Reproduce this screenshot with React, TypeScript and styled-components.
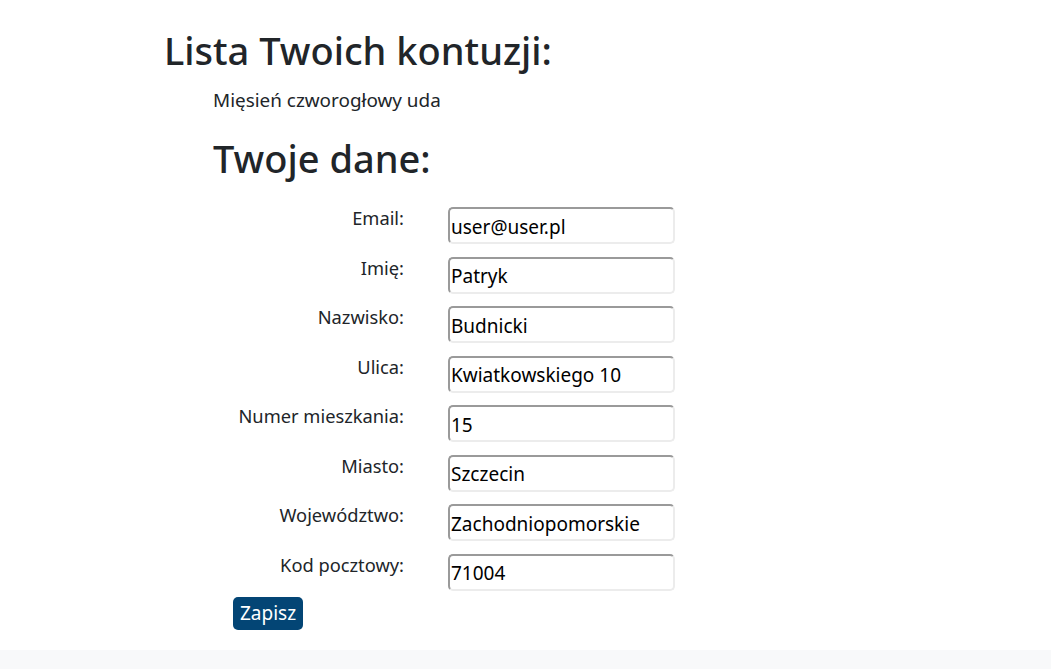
import React from "react";
import styled, { createGlobalStyle } from "styled-components";

const Global = createGlobalStyle`
  html, body { margin: 0; padding: 0; background: #fff; }
  body { font-family: "Noto Sans", "Open Sans", sans-serif; color: #212529; }
  * { box-sizing: border-box; }
`;

const Page = styled.div`
  min-height: 669px;
  display: flex;
  flex-direction: column;
`;

const Main = styled.main`
  flex: 1;
  padding: 28px 0 0 164px;
`;

const Title = styled.h1`
  margin: 0 0 13px 0;
  font-size: 38px;
  font-weight: 500;
  line-height: 1.2;
  color: #212529;
`;

const Section = styled.div`
  padding-left: 49px;
`;

const Injury = styled.div`
  font-size: 18.9px;
  line-height: 27px;
  margin-bottom: 22px;
`;

const SubTitle = styled.h2`
  margin: 0 0 26px 0;
  font-size: 38px;
  font-weight: 500;
  line-height: 1.2;
`;

const Form = styled.form`
  display: grid;
  grid-template-columns: 191px 227px;
  column-gap: 44px;
  row-gap: 12.5px;
`;

const Label = styled.label`
  text-align: right;
  font-size: 18.3px;
  line-height: 21px;
  white-space: nowrap;
`;

const Input = styled.input`
  height: 37px;
  width: 227px;
  font-family: "Noto Sans", sans-serif;
  font-size: 19px;
  color: #000;
  padding: 2px 1px 0;
  border: 2px solid #ececec;
  border-top-color: #9a9a9a;
  border-left-color: #9a9a9a;
  border-radius: 5px;
  background: #fff;
  outline: none;
`;

const Actions = styled.div`
  padding: 6px 0 0 20px;
`;

const Button = styled.button`
  background: #034575;
  color: #fff;
  border: none;
  border-radius: 5px;
  font-family: "Noto Sans", sans-serif;
  font-size: 19px;
  height: 33px;
  width: 70px;
  padding: 0;
  line-height: 33px;
`;

const Footer = styled.footer`
  height: 19px;
  background: #f8f9fa;
`;

const fields: [string, string][] = [
  ["Email:", "user@user.pl"],
  ["Imię:", "Patryk"],
  ["Nazwisko:", "Budnicki"],
  ["Ulica:", "Kwiatkowskiego 10"],
  ["Numer mieszkania:", "15"],
  ["Miasto:", "Szczecin"],
  ["Województwo:", "Zachodniopomorskie"],
  ["Kod pocztowy:", "71004"],
];

export default function App() {
  return (
    <>
      <Global />
      <Page>
        <Main>
          <Title>Lista Twoich kontuzji:</Title>
          <Section>
            <Injury>Mięsień czworogłowy uda</Injury>
            <SubTitle>Twoje dane:</SubTitle>
            <Form onSubmit={(e) => e.preventDefault()}>
              {fields.map(([l, v]) => (
                <React.Fragment key={l}>
                  <Label>{l}</Label>
                  <Input defaultValue={v} />
                </React.Fragment>
              ))}
            </Form>
            <Actions>
              <Button>Zapisz</Button>
            </Actions>
          </Section>
        </Main>
        <Footer />
      </Page>
    </>
  );
}
